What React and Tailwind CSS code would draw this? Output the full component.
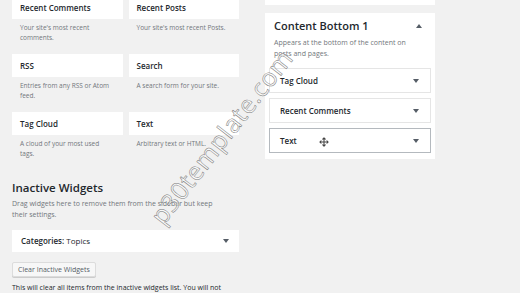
import React from 'react';

const widgets = [
  { title: 'Recent Comments', desc: "Your site's most recent comments." },
  { title: 'Recent Posts', desc: "Your site's most recent Posts." },
  { title: 'RSS', desc: 'Entries from any RSS or Atom feed.' },
  { title: 'Search', desc: 'A search form for your site.' },
  { title: 'Tag Cloud', desc: 'A cloud of your most used tags.' },
  { title: 'Text', desc: 'Arbitrary text or HTML.' },
];

const Caret = ({ up }) => (
  <svg width="6" height="4" viewBox="0 0 6 4" className={up ? 'rotate-180' : ''}>
    <path d="M0 0 L6 0 L3 4 Z" fill="#555d66" />
  </svg>
);

const SidebarWidget = ({ title, active, children }) => (
  <div
    className={`h-[25px] bg-white flex items-center justify-between pl-[10px] pr-[11px] border ${
      active ? 'border-[#b4b9be]' : 'border-[#e5e5e5]'
    }`}
  >
    <div className="flex items-center text-[8px] font-semibold text-[#23282d]">
      {title}
      {children}
    </div>
    <Caret />
  </div>
);

export default function App() {
  return (
    <div
      className="relative w-[520px] h-[293px] overflow-hidden bg-[#f1f1f1] flex pl-[12px] gap-[26px]"
      style={{ fontFamily: '"Open Sans", "Liberation Sans", sans-serif' }}
    >
      {/* Available widgets + inactive */}
      <div className="w-[227px] -mt-[4px] flex flex-col">
        <div className="grid grid-cols-2 gap-x-[6px]">
          {widgets.map((w) => (
            <div key={w.title} className="h-[58px]">
              <div className="h-[23px] bg-white flex items-center pl-[8px] text-[8px] font-semibold text-[#23282d]">
                {w.title}
              </div>
              <p className="pt-[4px] pl-[8px] pr-[10px] text-[6.5px] leading-[10px] text-[#72777c]">
                {w.desc}
              </p>
            </div>
          ))}
        </div>

        <h2 className="mt-[10px] text-[11.5px] leading-[16px] font-semibold text-[#23282d]">
          Inactive Widgets
        </h2>
        <p className="mt-[3px] text-[7px] leading-[10.5px] text-[#72777c] pr-[20px]">
          Drag widgets here to remove them from the sidebar but keep their settings.
        </p>
        <div className="mt-[10px] h-[24px] bg-white flex items-center justify-between pl-[9px] pr-[10px]">
          <span className="text-[8px] text-[#23282d]">
            <span className="font-semibold">Categories:</span> Topics
          </span>
          <Caret />
        </div>
        <button className="mt-[10px] self-start h-[15px] px-[5px] bg-[#f7f7f7] border border-[#dcdcdc] rounded-[2px] shadow-[0_1px_0_#ccc] text-[7px] leading-[13px] text-[#555d66]">
          Clear Inactive Widgets
        </button>
        <p className="mt-[6px] text-[7px] leading-[10px] text-[#23282d] whitespace-nowrap">
          This will clear all items from the inactive widgets list. You will not
        </p>
      </div>

      {/* Sidebar areas */}
      <div className="w-[170px] flex flex-col">
        <div className="h-[5px] bg-white" />
        <div className="mt-[8px] bg-white pt-[6px] pb-[6px]">
          <div className="flex items-center justify-between pl-[9px] pr-[13px]">
            <h3 className="text-[11px] leading-[14px] font-semibold text-[#23282d]">Content Bottom 1</h3>
            <Caret up />
          </div>
          <p className="mt-[4px] pl-[9px] pr-[20px] text-[7px] leading-[11px] text-[#72777c]">
            Appears at the bottom of the content on posts and pages.
          </p>
          <div className="mt-[9px] px-[4px] flex flex-col gap-[5px]">
            <SidebarWidget title="Tag Cloud" />
            <SidebarWidget title="Recent Comments" />
            <SidebarWidget title="Text" active>
              <svg width="10" height="10" viewBox="0 0 24 24" className="ml-[22px] mt-[3px]" fill="none" stroke="#444" strokeWidth="2.5" strokeLinecap="round" strokeLinejoin="round">
                <path d="M12 2v20M2 12h20M9 5l3-3 3 3M9 19l3 3 3-3M5 9l-3 3 3 3M19 9l3 3-3 3" />
              </svg>
            </SidebarWidget>
          </div>
        </div>
      </div>

      {/* watermark */}
      <div className="absolute left-[221px] top-[136px] w-0 h-0 flex items-center justify-center pointer-events-none">
        <div className="-rotate-[52deg] text-[25px] leading-none tracking-[0.5px] text-white/60 [-webkit-text-stroke:0.5px_#777] whitespace-nowrap">
          p30template.com
        </div>
      </div>
    </div>
  );
}
